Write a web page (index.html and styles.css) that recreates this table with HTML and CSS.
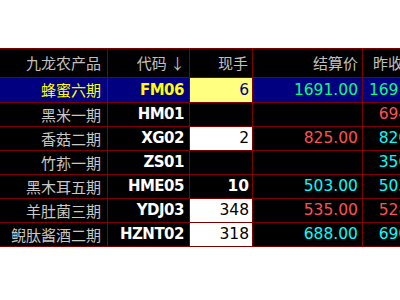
FILE: index.html
```html
<!DOCTYPE html>
<html lang="zh">
<head>
<meta charset="utf-8">
<link rel="stylesheet" href="styles.css">
</head>
<body>
<table class="quotes">
  <colgroup>
    <col class="c-name"><col class="c-code"><col class="c-vol"><col class="c-price"><col class="c-prev">
  </colgroup>
  <thead>
    <tr class="head">
      <th>九龙农产品</th><th>代码 ↓</th><th>现手</th><th>结算价</th><th>昨收盘价</th>
    </tr>
  </thead>
  <tbody>
    <tr class="row first sel">
      <td class="name">蜂蜜六期</td><td class="code">FM06</td><td class="vol hl">6</td><td class="num green">1691.00</td><td class="num green">1691.00</td>
    </tr>
    <tr class="row">
      <td class="name">黑米一期</td><td class="code">HM01</td><td class="vol"></td><td class="num"></td><td class="num red">694.00</td>
    </tr>
    <tr class="row">
      <td class="name">香菇二期</td><td class="code">XG02</td><td class="vol wh">2</td><td class="num red">825.00</td><td class="num cyan">820.00</td>
    </tr>
    <tr class="row">
      <td class="name">竹荪一期</td><td class="code">ZS01</td><td class="vol"></td><td class="num"></td><td class="num cyan">356.00</td>
    </tr>
    <tr class="row">
      <td class="name">黑木耳五期</td><td class="code">HME05</td><td class="vol">10</td><td class="num cyan">503.00</td><td class="num cyan">503.00</td>
    </tr>
    <tr class="row">
      <td class="name">羊肚菌三期</td><td class="code">YDJ03</td><td class="vol wh">348</td><td class="num red">535.00</td><td class="num red">528.00</td>
    </tr>
    <tr class="row">
      <td class="name">鲵肽酱酒二期</td><td class="code">HZNT02</td><td class="vol wh">318</td><td class="num cyan">688.00</td><td class="num cyan">690.00</td>
    </tr>
  </tbody>
</table>
</body>
</html>
```
FILE: styles.css
```css
html, body {
  margin: 0;
  padding: 0;
  background: #ffffff;
  overflow: hidden;
}

.quotes {
  margin: 48px 0 0 -1px;
  border-collapse: separate;
  border-spacing: 1px;
  background: #800000;
  table-layout: fixed;
  width: 439px;
  font-family: "DejaVu Sans", "Noto Sans CJK SC", sans-serif;
}

.c-name { width: 107px; }
.c-code { width: 81px; }
.c-vol { width: 62px; }
.c-price { width: 109px; }
.c-prev { width: 74px; }

.quotes th,
.quotes td {
  padding: 0 4px 0 0;
  background: #000000;
  text-align: right;
  white-space: nowrap;
  overflow: hidden;
  vertical-align: middle;
}

.head th {
  height: 28px;
  font-family: "Noto Sans CJK SC", sans-serif;
  font-weight: normal;
  font-size: 15px;
  color: #c0c0c0;
  line-height: 28px;
}
.head th:first-child { padding-right: 6px; }

.row td { height: 23px; line-height: 23px; }
.row.first td { height: 24px; line-height: 24px; }

.name {
  font-family: "Noto Sans CJK SC", sans-serif;
  font-size: 15px;
  color: #c8c8c8;
}
.quotes td.name { padding-right: 6px; }

.code {
  font-weight: bold;
  font-size: 15px;
  letter-spacing: -0.5px;
  color: #ffffff;
}
.quotes td.code { padding-right: 5px; }

.vol {
  font-size: 15.5px;
  color: #ffffff;
  font-weight: bold;
}
.quotes td.vol { padding-right: 3px; }
.vol.wh { background: #ffffff; color: #000000; font-weight: normal; }

.num { font-size: 15.5px; }
.green { color: #00ff80; }
.red { color: #ff5050; }
.cyan { color: #00ffff; }

.sel td { background: #000080; }
.sel .name, .sel .code { color: #ffff00; }
.quotes .sel td.hl { background: #ffff80; color: #000080; font-weight: normal; }
```
